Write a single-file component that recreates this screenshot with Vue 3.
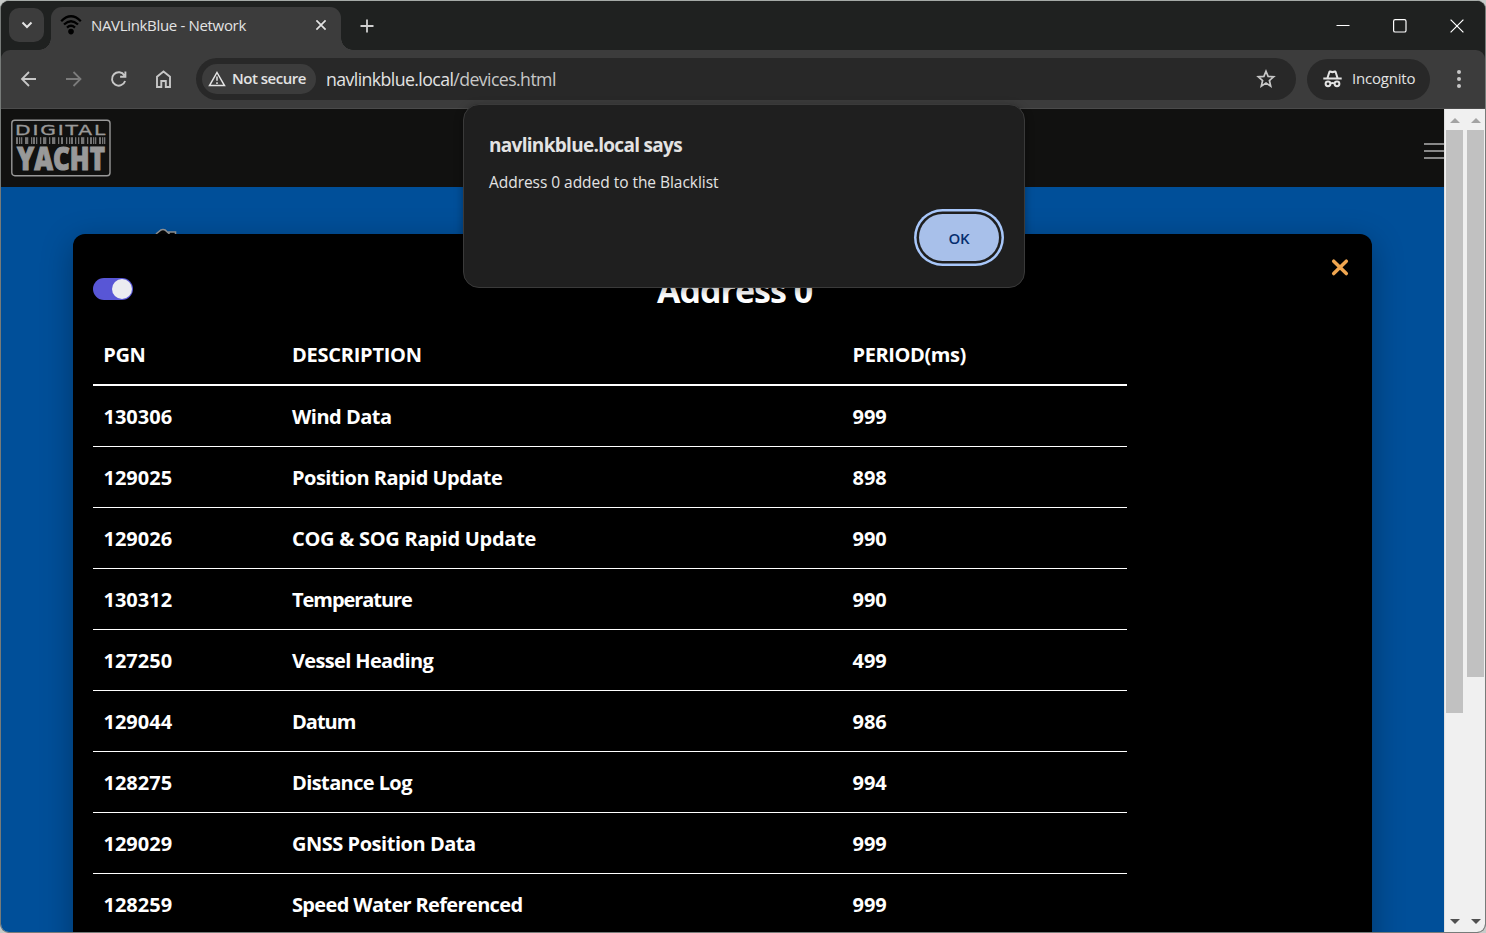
<script setup>
const rows = [
  ['130306', 'Wind Data', '999', -0.5],
  ['129025', 'Position Rapid Update', '898', -0.53],
  ['129026', 'COG & SOG Rapid Update', '990', -0.27],
  ['130312', 'Temperature', '990', -1.05],
  ['127250', 'Vessel Heading', '499', -0.65],
  ['129044', 'Datum', '986', -1],
  ['128275', 'Distance Log', '994', -0.6],
  ['129029', 'GNSS Position Data', '999', -0.47],
  ['128259', 'Speed Water Referenced', '999', -0.65],
]
const bars = [0, 3, 5, 9, 11, 15, 17, 20, 24, 27, 29, 33, 36, 38, 42, 45, 50, 53, 55, 59, 62, 65, 67, 71, 74, 77, 79, 83, 86, 88]
</script>

<template>
  <div class="desktop">
    <div class="window">
      <header class="tabstrip">
        <button class="tabsearch">
          <svg width="12" height="8" viewBox="0 0 12 8"><path d="M1.5 1.5 6 6l4.5-4.5" fill="none" stroke="#e3e3e3" stroke-width="2" /></svg>
        </button>
        <div class="tab">
          <svg class="wifi" width="22" height="20" viewBox="0 0 22 20" fill="none" stroke="#000" stroke-width="2.3">
            <path d="M1.2 6.2Q11-3.6 20.8 6.2M4 9.5q7-6.6 14 0M7 12.6q4-3.6 8 0" />
            <circle cx="11" cy="16.6" r="2.8" fill="#000" stroke="none" />
          </svg>
          <span class="tabtitle">NAVLinkBlue - Network</span>
          <svg class="tabclose" width="12" height="12" viewBox="0 0 12 12"><path d="m1.4 1.4 9.2 9.2m0-9.2-9.2 9.2" stroke="#e3e3e3" stroke-width="1.7" /></svg>
        </div>
        <svg class="newtab" width="14" height="14" viewBox="0 0 14 14"><path d="M7 .5v13M.5 7h13" stroke="#d0d0d0" stroke-width="1.8" /></svg>
        <div class="winctl">
          <svg width="14" height="14" viewBox="0 0 14 14"><path d="M.5 6.5h13" stroke="#fff" /></svg>
          <svg width="14" height="14" viewBox="0 0 14 14"><rect x=".6" y=".6" width="12.4" height="12.4" rx="1.6" fill="none" stroke="#fff" stroke-width="1.2" /></svg>
          <svg width="14" height="14" viewBox="0 0 14 14"><path d="m.6.6 12.8 12.8m0-12.8L.6 13.4" stroke="#fff" stroke-width="1.2" /></svg>
        </div>
      </header>

      <nav class="toolbar">
        <div class="navicons">
          <svg width="18" height="18" viewBox="0 0 18 18" fill="none" stroke="#c7c7c7" stroke-width="1.8"><path d="M16 9H2.5M9 2 2 9l7 7" /></svg>
          <svg width="18" height="18" viewBox="0 0 18 18" fill="none" stroke="#7b7b7b" stroke-width="1.8"><path d="M1 9h14M8.5 2l7 7-7 7" /></svg>
          <svg width="18" height="18" viewBox="0 0 18 18" fill="none" stroke="#c7c7c7" stroke-width="1.9"><path d="M14.4 5.4A6.7 6.7 0 1 0 15.1 11M15.4 1.5V6.8h-5.3" /></svg>
          <svg width="18" height="18" viewBox="0 0 18 18" fill="none" stroke="#c7c7c7" stroke-width="1.9"><path d="M2 17V6.8l6.5-5.3L15 6.8V17h-4.2v-6H6.3v6z" /></svg>
        </div>
        <div class="omnibox">
          <div class="secure">
            <svg width="18" height="16" viewBox="0 0 18 16"><path d="M9 1.5 16.5 14.6h-15z" fill="none" stroke="#e3e3e3" stroke-width="1.5" /><path d="M9 5.6v4.2m0 1.5v1.8" stroke="#e3e3e3" stroke-width="1.5" /></svg>
            <span>Not secure</span>
          </div>
          <div class="url">navlinkblue.local<span>/devices.html</span></div>
          <svg class="star" width="20" height="20" viewBox="0 0 20 20"><path d="m10 2.2 2.1 5.2 5.6.4-4.3 3.7 1.3 5.6-4.7-3-4.7 3 1.3-5.6-4.3-3.7 5.6-.4z" fill="none" stroke="#c7c7c7" stroke-width="1.7" /></svg>
        </div>
        <div class="incognito">
          <svg width="19" height="18" viewBox="0 0 19 18"><path d="M.3 7.6h18.4v1.8H.3zM3.5 7.8 5.5 1.5Q6 .1 7.2.5l2.3.6L11.8.5q1.2-.4 1.7 1l2 6.3h-2.1L11.8 2.7l-2.3.6-2.3-.6-1.6 5.1z" fill="#e3e3e3" /><g fill="none" stroke="#e3e3e3" stroke-width="2"><circle cx="5" cy="13.8" r="2.4" /><circle cx="14" cy="13.8" r="2.4" /><path d="M7.4 13.4q2.1-1 4.2 0" /></g></svg>
          <span>Incognito</span>
        </div>
        <svg class="dots" width="4" height="18" viewBox="0 0 4 18" fill="#c7c7c7"><circle cx="2" cy="2" r="2" /><circle cx="2" cy="9" r="2" /><circle cx="2" cy="16" r="2" /></svg>
      </nav>

      <main class="viewport">
        <div class="page">
          <div class="sitebar">
            <svg class="logo" width="100" height="58" viewBox="0 0 100 58">
              <rect x=".8" y="1.3" width="98.2" height="55.4" rx="3" fill="none" stroke="#999" stroke-width="1.4" />
              <text x="4" y="15.5" font-size="13.4" font-family="'DejaVu Sans', sans-serif" fill="#999" stroke="#999" stroke-width=".3" letter-spacing="1.2" textLength="92" lengthAdjust="spacingAndGlyphs">DIGITAL</text>
              <rect v-for="(b, i) in bars" :key="b" :x="5 + b" y="18.2" :width="i % 3 === 0 ? 2 : 1.3" height="6.8" fill="#757575" />
              <text x="6" y="51.2" font-size="32.5" font-weight="800" font-family="'Open Sans', sans-serif" fill="#999" stroke="#999" stroke-width="1.1" textLength="88" lengthAdjust="spacingAndGlyphs">YACHT</text>
            </svg>
            <div class="burger"><i></i><i></i><i></i></div>
          </div>
          <section class="blue">
            <svg class="peek" width="24" height="12" viewBox="0 0 24 12"><path d="m1 7 5-4q2-1 4 0l4 3.5V5h6.5v7" fill="#050505" stroke="#999" stroke-width="1.6" /></svg>
            <article class="modal">
              <div class="modalhead">
                <div class="toggle"><i></i></div>
                <h2>Address 0</h2>
                <svg class="close" width="18" height="17" viewBox="0 0 18 17"><path d="m2.7 2.2 12.6 12.4M15.3 2.2 2.7 14.6" stroke="#f0a650" stroke-width="3.5" stroke-linecap="round" /></svg>
              </div>
              <div class="table">
                <div class="row head"><span class="h1">PGN</span><span class="h2">DESCRIPTION</span><span class="h3">PERIOD(ms)</span></div>
                <div v-for="r in rows" :key="r[0]" class="row"><span class="pgn">{{ r[0] }}</span><span class="desc" :style="{ letterSpacing: r[3] + 'px' }">{{ r[1] }}</span><span>{{ r[2] }}</span></div>
              </div>
            </article>
          </section>
        </div>
        <div class="scroll inner"><b class="up"></b><i></i><b class="down"></b></div>
        <div class="scroll outer"><b class="up"></b><i></i><b class="down"></b></div>
      </main>

      <div class="dialog">
        <h3>navlinkblue.local says</h3>
        <p>Address 0 added to the Blacklist</p>
        <button>OK</button>
      </div>
    </div>
  </div>
</template>

<style>
body { margin: 0; overflow: hidden; }
</style>

<style scoped>
* { box-sizing: border-box; }
svg { display: block; flex: none; overflow: visible; }
button { border: 0; padding: 0; font: inherit; }
.desktop { width: 1486px; height: 933px; background: #c8cbc9; overflow: hidden; font-family: "Open Sans", "Noto Sans", sans-serif; }
.window { position: relative; width: 1486px; height: 933px; border: 1px solid #777b79; border-top-color: #a5aaa7; border-radius: 9px; overflow: hidden; background: #1f2120; display: flex; flex-direction: column; }
.tabstrip { height: 49px; flex: none; display: flex; align-items: center; padding-left: 8px; background: #1f2120; }
.tabsearch { width: 35px; height: 34px; border-radius: 10px; background: #3c3c3c; display: grid; place-items: center; margin-bottom: 1px; }
.tab { position: relative; width: 290px; height: 43px; margin: 6px 0 0 7px; border-radius: 11px 11px 0 0; background: #3c3c3c; display: flex; align-items: center; padding: 0 14px 7px 9px; }
.tab::before, .tab::after { content: ""; position: absolute; bottom: 0; width: 12px; height: 12px; }
.tab::before { left: -12px; background: radial-gradient(circle at 0 0, transparent 11.5px, #3c3c3c 12px); }
.tab::after { right: -12px; background: radial-gradient(circle at 100% 0, transparent 11.5px, #3c3c3c 12px); }
.tabtitle { margin-left: 9px; flex: 1; font-size: 15px; letter-spacing: -.33px; color: #e3e3e3; white-space: nowrap; padding-bottom: 1px; }
.newtab { margin-left: 18.5px; }
.winctl { margin-left: auto; margin-right: 21px; display: flex; gap: 43px; }
.toolbar { height: 59px; flex: none; background: #3c3c3c; border-bottom: 1px solid #4b4b4b; border-radius: 9px 9px 0 0; display: flex; align-items: center; padding-left: 19px; }
.navicons { display: flex; gap: 27px; }
.omnibox { margin-left: 23px; width: 1100px; height: 42px; border-radius: 21px; background: #282828; display: flex; align-items: center; padding: 0 20px 0 6px; }
.secure { width: 114px; height: 30px; border-radius: 15px; background: #3c3c3c; display: flex; align-items: center; gap: 6px; padding-left: 6px; font-size: 15px; font-weight: 650; letter-spacing: -.5px; color: #e3e3e3; white-space: nowrap; }
.secure span, .incognito span { padding-bottom: 2px; }
.url { flex: 1; margin-left: 10px; font-size: 17.7px; letter-spacing: -.58px; color: #e3e3e3; white-space: nowrap; }
.url span { color: #c7c7c7; }
.incognito { margin-left: 11px; width: 123px; height: 41px; border-radius: 21px; background: #282828; display: flex; align-items: center; padding-left: 16px; gap: 10px; font-size: 15px; letter-spacing: -.2px; color: #e3e3e3; }
.dots { margin-left: 26.5px; }
.viewport { flex: 1; min-height: 0; display: flex; background: #f0f0f0; }
.page { width: 1443px; height: 100%; display: flex; flex-direction: column; overflow: hidden; }
.sitebar { height: 78px; flex: none; background: #111110; display: flex; align-items: center; justify-content: space-between; padding-left: 10px; }
.burger { width: 20px; display: flex; flex-direction: column; gap: 5px; margin-top: 5px; }
.burger i { height: 2px; background: #888; }
.blue { position: relative; flex: 1; min-height: 0; background: #004f99; padding: 47px 72px 0; overflow: hidden; }
.peek { position: absolute; left: 154px; top: 40px; }
.modal { position: relative; width: 1299px; height: 760px; background: #000; border-radius: 12px 12px 0 0; box-shadow: 0 8px 32px rgba(0,0,0,.3); color: #fff; padding: 0 20px; }
.modalhead { height: 91px; display: flex; align-items: flex-start; }
.toggle { width: 40px; height: 22px; margin-top: 44px; border-radius: 11px; background: #5856d6; padding: 1px 1px 0 19px; }
.toggle i { display: block; width: 20px; height: 20px; border-radius: 50%; background: #ebecf0; }
h2 { margin: 33px 0 0 524px; font-size: 34px; line-height: 46px; font-weight: 700; letter-spacing: -1px; white-space: nowrap; }
.close { margin: 24.5px 3.5px 0 auto; }
.table { width: 1034px; }
.row { display: grid; grid-template-columns: 188px 560.5px 1fr; height: 61px; align-items: center; border-bottom: 1px solid #fff; font-size: 20px; font-weight: 700; line-height: 28px; white-space: nowrap; padding-top: 2px; }
.row span { padding-left: 11px; }
.row .pgn { padding-left: 10.5px; }
.row.head { border-bottom-width: 2px; padding-top: 0; }
.row .h1 { letter-spacing: -.4px; padding-left: 10.3px; }
.h2 { letter-spacing: -.25px; }
.h3 { letter-spacing: -.4px; }
.scroll { display: flex; flex-direction: column; align-items: center; }
.inner { width: 21px; border-left: 1px solid #e0e0e0; padding-right: 1px; }
.outer { width: 20px; padding-left: 1px; }
.scroll i { width: 17px; background: #c1c1c1; margin-top: 7px; flex: none; }
.inner i { height: 583px; }
.outer i { height: 547px; }
.scroll b { border: 5px solid transparent; }
.scroll .up { margin-top: 9px; border-top: 0; border-bottom-color: #a3a3a3; }
.scroll .down { margin: auto 0 8px; border-bottom: 0; border-top-color: #505050; }
.dialog { position: absolute; left: 462px; top: 103px; width: 562px; height: 184px; border: 1px solid #3a3a3a; border-radius: 16px; background: #1f1f1f; color: #e3e3e3; padding: 26px 25px; box-shadow: 0 2px 8px rgba(0,0,0,.35); display: flex; flex-direction: column; }
h3 { margin: 0; font-size: 19px; line-height: 28px; font-weight: 700; letter-spacing: -.7px; }
p { margin: 11px 0 0; font-size: 15.5px; line-height: 24px; letter-spacing: -.04px; }
.dialog button { position: absolute; right: 25px; top: 109px; width: 80px; height: 47px; border-radius: 24px; background: #a8c0ea; color: #062e6f; font-size: 15px; font-weight: 600; letter-spacing: -.2px; box-shadow: 0 0 0 2.5px #1f1f1f, 0 0 0 5px #a8c7fa; }
</style>
